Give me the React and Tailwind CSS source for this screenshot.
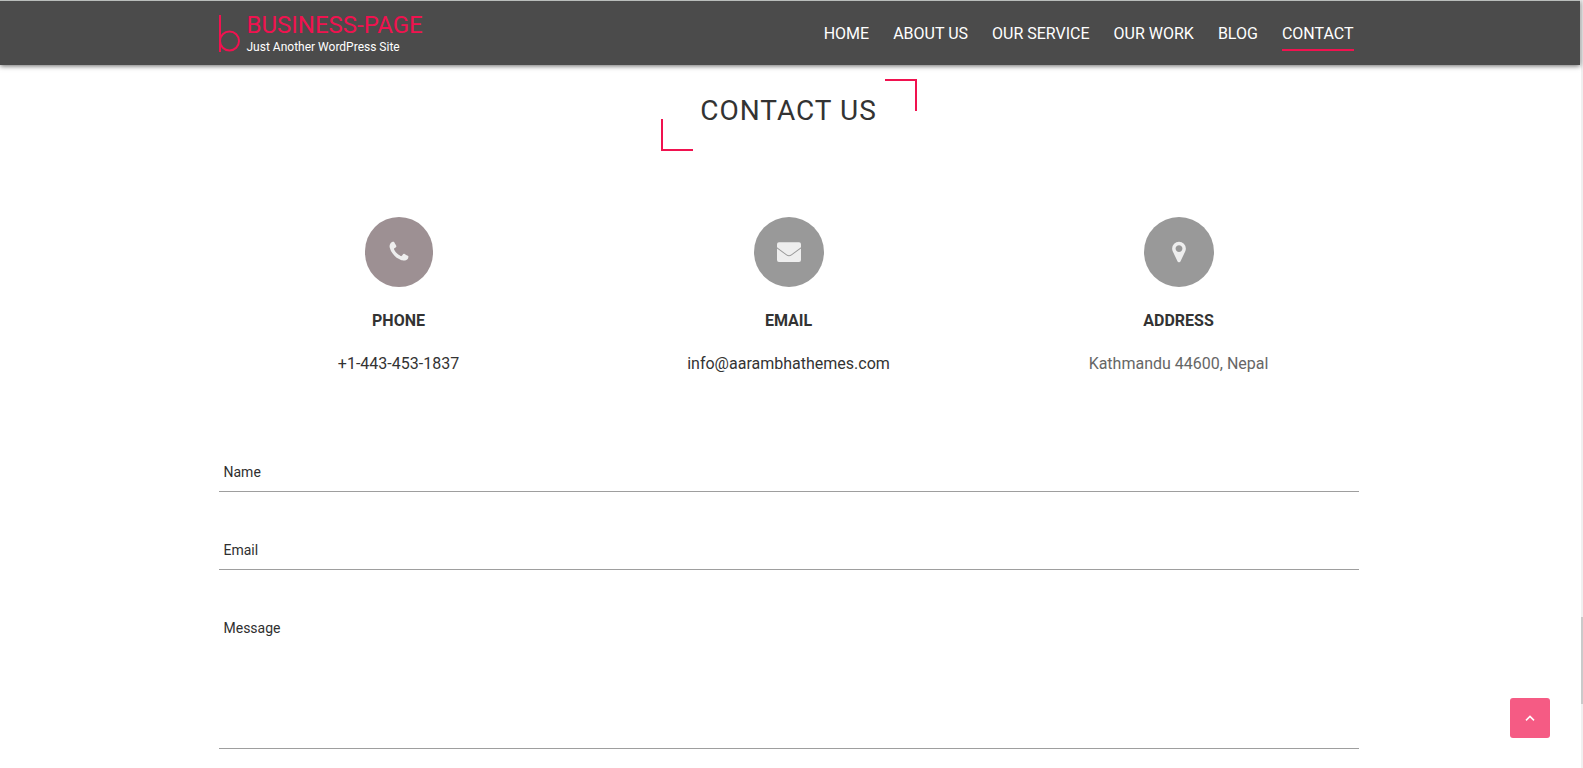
import React from "react";

const navItems = ["Home", "About Us", "Our Service", "Our Work", "Blog", "Contact"];

const PhoneIcon = () => (
  <svg viewBox="0 0 1792 1792" fill="currentColor" className="size-6" aria-hidden="true">
    <path d="M1600 1240q0 27-10 70.5t-21 68.5q-21 50-122 106-94 51-186 51-27 0-53-3.5t-57.5-12.5-47-14.5-55.5-20.5-49-18q-98-35-175-83-127-79-264-216t-216-264q-48-77-83-175-3-9-18-49t-20.5-55.5-14.5-47-12.5-57.5-3.5-53q0-92 51-186 56-101 106-122 25-11 68.5-21t70.5-10q14 0 21 3 18 6 53 76 11 19 30 54t35 63.5 31 53.5q3 4 17.5 25t21.5 35.5 7 28.5q0 20-28.5 50t-62 55-62 53-28.5 46q0 9 5 22.5t8.5 20.5 14 24 11.5 19q76 137 174 235t235 174q2 1 19 11.5t24 14 20.5 8.5 22.5 5q18 0 46-28.5t53-62 55-62 50-28.5q14 0 28.5 7t35.5 21.5 25 17.5q25 15 53.5 31t63.5 35 54 30q70 35 76 53 3 7 3 21z" />
  </svg>
);

const MailIcon = () => (
  <svg viewBox="0 0 24 24" fill="currentColor" className="size-6" aria-hidden="true">
    <path d="M0 4.2Q0 2.2 2 2.2H22Q24 2.2 24 4.2V7.2L14.2 14.4Q12 16 9.8 14.4L0 7.2Z" />
    <path d="M0 8.6L9.3 15.3Q12 17.2 14.7 15.3L24 8.6V20Q24 22 22 22H2Q0 22 0 20Z" />
  </svg>
);

const PinIcon = () => (
  <svg viewBox="0 0 1792 1792" fill="currentColor" className="size-6" aria-hidden="true">
    <path d="M1152 640q0-106-75-181t-181-75-181 75-75 181 75 181 181 75 181-75 75-181zm256 0q0 109-33 179l-364 774q-16 33-47.5 52t-67.5 19-67.5-19-46.5-52l-365-774q-33-70-33-179 0-212 150-362t362-150 362 150 150 362z" />
  </svg>
);

const Header = () => (
  <header className="relative mr-px border-t border-[#b9bdbb] bg-[#4b4b4b] pr-[3px] shadow-[0_1px_5px_rgba(0,0,0,0.6)]">
    <div className="mx-auto flex h-16 max-w-[1140px] items-center justify-between">
      <a href="#home" className="flex items-center gap-[7px]">
        <svg viewBox="0 0 21 37" className="h-[37px] w-[21px]" fill="none" stroke="#f0124f" strokeWidth="2" aria-hidden="true">
          <path d="M1 0v37" />
          <circle cx="10.5" cy="26" r="9.5" />
        </svg>
        <span className="flex flex-col pt-1">
          <span className="text-2xl leading-6 text-[#f0124f]">BUSINESS-PAGE</span>
          <span className="text-xs leading-5 text-white">Just Another WordPress Site</span>
        </span>
      </a>
      <nav className="flex gap-6 pr-[5px]">
        {navItems.map((item) => (
          <a
            key={item}
            href="#contact"
            className={
              item === "Contact"
                ? "border-b-2 border-[#f0124f] pt-[7px] pb-[3px] uppercase text-white"
                : "border-b-2 border-transparent pt-[7px] pb-[3px] uppercase text-white"
            }
          >
            {item}
          </a>
        ))}
      </nav>
    </div>
  </header>
);

const ContactCard = ({ icon, color, title, children }) => (
  <div className="flex flex-col items-center text-center">
    <div className={`flex h-[70px] items-center justify-center rounded-full text-[#eeeeee] ${color}`}>{icon}</div>
    <h3 className="mt-[22px] font-bold uppercase">{title}</h3>
    <div className="mt-[19px]">{children}</div>
  </div>
);

const ContactForm = () => (
  <form className="mx-auto mt-[76px] flex max-w-[1140px] flex-col gap-[38px] text-sm">
    <input
      type="text"
      aria-label="Name"
      placeholder="Name"
      className="h-10 w-full border-b border-[#9e9e9e] px-[5px] outline-none placeholder:text-[#2f2f2f]"
    />
    <input
      type="email"
      aria-label="Email"
      placeholder="Email"
      className="h-10 w-full border-b border-[#9e9e9e] px-[5px] outline-none placeholder:text-[#2f2f2f]"
    />
    <textarea
      aria-label="Message"
      placeholder="Message"
      className="h-[141px] w-full resize-none border-b border-[#9e9e9e] px-[5px] py-2.5 outline-none placeholder:text-[#2f2f2f]"
    />
  </form>
);

const App = () => {
  return (
    <div className="flex min-h-screen bg-white font-['Roboto',sans-serif] text-base text-[#333333]">
      <div className="min-w-0 flex-1">
        <Header />
        <main className="pr-1">
          <div className="relative mx-auto mt-3.5 flex h-[72px] w-64 items-center justify-center pb-2">
            <span className="absolute top-0 right-0 size-8 border-t-2 border-r-2 border-[#f0124f]" />
            <span className="absolute bottom-0 left-0 size-8 border-b-2 border-l-2 border-[#f0124f]" />
            <h2 className="text-[28px] leading-8 tracking-[1px] uppercase">Contact Us</h2>
          </div>
          <section className="mx-auto mt-[66px] grid max-w-[1170px] grid-cols-3">
            <ContactCard icon={<PhoneIcon />} color="w-[68px] bg-[#9d9093]" title="Phone">
              <a href="tel:+14434531837">+1-443-453-1837</a>
            </ContactCard>
            <ContactCard icon={<MailIcon />} color="w-[70px] bg-[#999999]" title="Email">
              <a href="mailto:info@aarambhathemes.com">info@aarambhathemes.com</a>
            </ContactCard>
            <ContactCard icon={<PinIcon />} color="w-[70px] bg-[#999999]" title="Address">
              <address className="text-[#666666] not-italic">Kathmandu 44600, Nepal</address>
            </ContactCard>
          </section>
          <ContactForm />
        </main>
      </div>
      {/* page scroll track */}
      <div className="w-0.5 bg-[#f0f0f0] pt-[617px]">
        <div className="h-[87px] bg-[#cacaca]" />
      </div>
      <button
        type="button"
        aria-label="Back to top"
        className="fixed right-[33px] bottom-[30px] flex size-10 items-center justify-center rounded-[3px] bg-[#f55b84] text-white"
      >
        <svg viewBox="0 0 10 6" className="h-1.5 w-2.5" fill="none" stroke="currentColor" strokeWidth="1.5" aria-hidden="true">
          <path d="M1 5.4l4-4 4 4" />
        </svg>
      </button>
    </div>
  );
};

export default App;
